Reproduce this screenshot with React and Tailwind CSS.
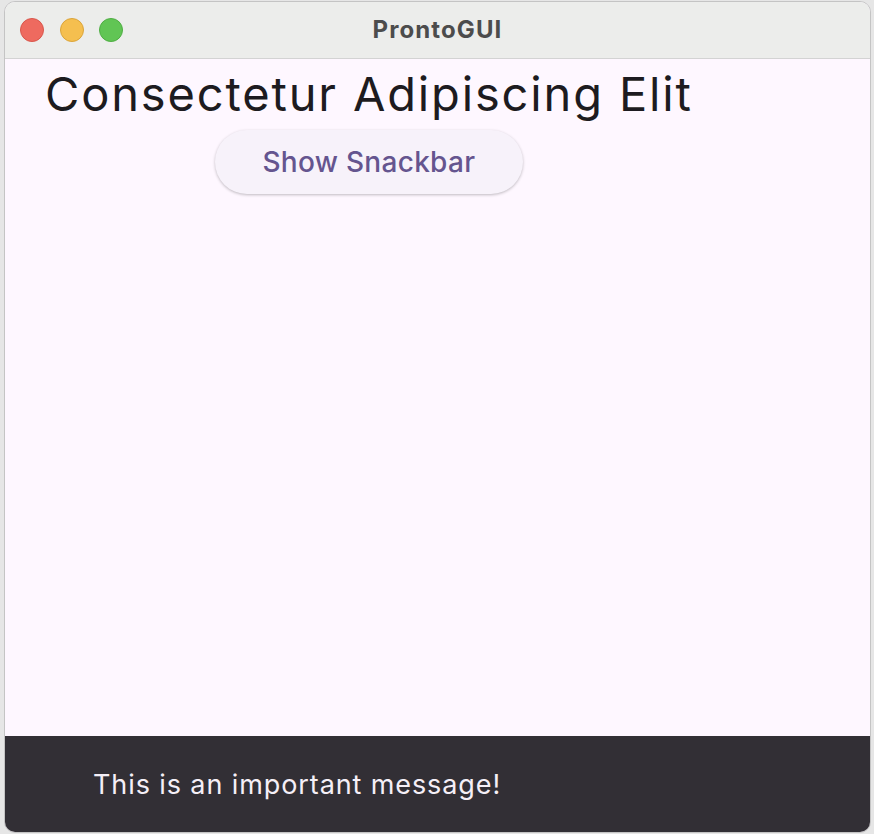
// App.jsx — ProntoGUI window with snackbar

const FONT = { fontFamily: 'Inter, "Noto Sans", sans-serif' }

function TrafficLights() {
  return (
    <div className="flex items-center gap-[15.5px] pl-[15px]">
      <span className="block w-[24px] h-[24px] rounded-full bg-[#ee6a5f] border border-[#d9574c]" />
      <span className="block w-[24px] h-[24px] rounded-full bg-[#f5bf4f] border border-[#dba53a]" />
      <span className="block w-[24px] h-[24px] rounded-full bg-[#61c554] border border-[#4fae43]" />
    </div>
  )
}

export default function App() {
  return (
    <div className="w-[874px] h-[834px] bg-[#e6e6e6] pl-[4px] pt-[1px]" style={FONT}>
      <div className="w-[867px] h-[832px] rounded-[11px] border border-[#c4c4c4] overflow-hidden flex flex-col bg-[#fef7ff]">
        {/* title bar */}
        <div className="relative h-[57px] shrink-0 bg-[#ecedeb] border-b border-[#d3d3d3] flex items-center">
          <TrafficLights />
          <div className="absolute inset-0 flex items-center justify-center text-[24px] font-bold text-[#4c4c4c] tracking-[1.1px]">
            ProntoGUI
          </div>
        </div>

        {/* content */}
        <div className="flex-1 pl-[40px] pt-[6px]">
          <div className="inline-flex flex-col items-center">
            <h1 className="text-[47px] leading-[57px] text-[#1d1b20] font-normal tracking-[1.85px]">
              Consectetur Adipiscing Elit
            </h1>
            <button className="mt-[8px] w-[308px] h-[64px] rounded-full bg-[#f7f2fa] text-[#65558f] text-[28px] font-medium tracking-[0.3px] shadow-[0_1px_3px_rgba(0,0,0,0.25)]">
              Show Snackbar
            </button>
          </div>
        </div>

        {/* snackbar */}
        <div className="h-[96px] shrink-0 bg-[#322f35] flex items-center pl-[88px] pt-[2px]">
          <span className="text-[27px] text-[#f5eff7] tracking-[0.9px]">This is an important message!</span>
        </div>
      </div>
    </div>
  )
}
